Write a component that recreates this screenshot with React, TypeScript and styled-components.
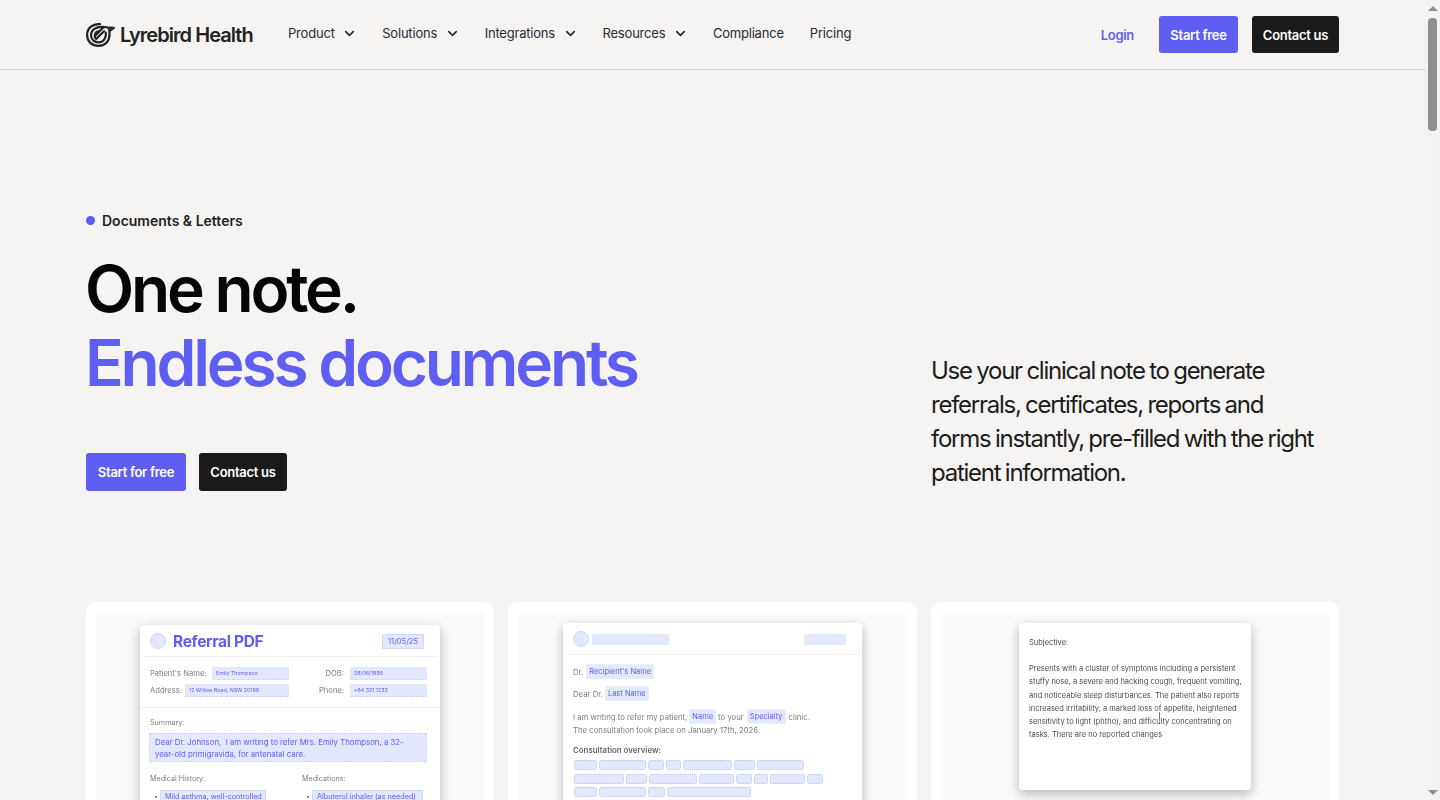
import React from "react";
import styled, {createGlobalStyle} from "styled-components";
import {ChevronDown} from "lucide-react";

const INDIGO = '#5f5ef3'
const INK = '#1a1a1a'
const FIELD = '#e3e8fd'
const FIELD_EDGE = '#cfd6fb'

const GlobalStyle = createGlobalStyle`
  html, body {
    margin: 0;
    height: 800px;
    overflow: hidden;
    background: #f5f4f2;
    font-family: Inter, "Liberation Sans", sans-serif;
  }
  * { box-sizing: border-box; }
`

const Shell = styled.div`
  display: flex;
  width: 1440px;
  height: 800px;
  overflow: hidden;
`

const Page = styled.main`
  width: 1425px;
  flex: none;
`

const Scrollbar = styled.div`
  width: 15px;
  flex: none;
  background: #f3f3f3;
  display: flex;
  flex-direction: column;
  align-items: center;
`

const ScrollArrow = styled.div<{$down?: boolean}>`
  flex: none;
  margin: ${props => props.$down ? 'auto 0 5px' : '6px 0 7px'};
  border-left: 5px solid transparent;
  border-right: 5px solid transparent;
  border-top: ${props => props.$down ? '5px solid #8f8f8f' : 'none'};
  border-bottom: ${props => props.$down ? 'none' : '5px solid #8f8f8f'};
`

const ScrollThumb = styled.div`
  width: 9px;
  height: 113px;
  border-radius: 4px;
  background: #8f8f8f;
`

const Nav = styled.header`
  height: 70px;
  border-bottom: 1px solid #d6d5da;
  padding: 16px 86px 0;
  display: flex;
  align-items: flex-start;
`

const Brand = styled.div`
  display: flex;
  align-items: center;
  gap: 5px;
  height: 37px;
  color: #222;
  font-size: 20px;
  font-weight: 600;
  letter-spacing: -0.95px;
  width: 202px;
  flex: none;
`

const NavLinks = styled.nav`
  display: flex;
  align-items: center;
  gap: 26px;
  height: 34px;
`

const NavLink = styled.a`
  display: flex;
  align-items: center;
  gap: 7.5px;
  color: #2a2a33;
  font-size: 13px;
  letter-spacing: -0.2px;
  white-space: nowrap;
`

const MenuChevron = styled(ChevronDown)`
  margin-right: -1px;
`

const NavActions = styled.div`
  margin-left: auto;
  display: flex;
  align-items: center;
  gap: 14px;
`

const LoginLink = styled.a`
  color: ${INDIGO};
  font-size: 13px;
  font-weight: 600;
  letter-spacing: -0.3px;
  margin-right: 11px;
`

const Button = styled.a<{$dark?: boolean; $width: number; $height: number}>`
  display: flex;
  align-items: center;
  justify-content: center;
  width: ${props => props.$width}px;
  height: ${props => props.$height}px;
  border-radius: 3px;
  background: ${props => props.$dark ? INK : INDIGO};
  color: #fff;
  font-size: 13px;
  font-weight: 600;
  letter-spacing: -0.28px;
  white-space: nowrap;
`

const Content = styled.div`
  padding: 0 86px;
`

const Hero = styled.section`
  display: grid;
  grid-template-columns: 845px 1fr;
  align-items: end;
  padding-top: 140px;
`

const Eyebrow = styled.div`
  display: flex;
  align-items: center;
  gap: 7px;
  height: 20px;
  font-size: 14px;
  font-weight: 600;
  color: #222;
`

const Dot = styled.span`
  width: 9px;
  height: 9px;
  border-radius: 50%;
  background: ${INDIGO};
`

const Title = styled.h1`
  margin: 22px 0 0 -1px;
  font-size: 64px;
  line-height: 74px;
  font-weight: 600;
  letter-spacing: -3.2px;
  color: #050505;
`

const TitleAccent = styled.span`
  display: block;
  color: ${INDIGO};
`

const HeroActions = styled.div`
  display: flex;
  gap: 13px;
  margin-top: 53px;
`

const Lead = styled.p`
  margin: 0 0 1px;
  max-width: 385px;
  font-size: 24px;
  line-height: 34px;
  letter-spacing: -1.25px;
  word-spacing: -1px;
  color: #1c1c1c;
`

const Cards = styled.section`
  display: grid;
  grid-template-columns: 408px 409px 408px;
  gap: 14px;
  margin-top: 111px;
`

const Card = styled.article`
  background: #fff;
  border-radius: 10px;
  padding: 11px 10px;
  height: 400px;
`

const Panel = styled.div<{$top: number}>`
  background: #fafafa;
  border-radius: 4px;
  height: 100%;
  padding-top: ${props => props.$top}px;
  display: flex;
  justify-content: center;
`

const Doc = styled.div<{$width: number; $height: number}>`
  width: ${props => props.$width}px;
  height: ${props => props.$height}px;
  background: #fff;
  border-radius: 4px;
  box-shadow: 0 4px 12px rgba(0, 0, 0, 0.27);
  color: #7d7d82;
  font-size: 8px;
  filter: blur(0.25px);
  align-self: flex-start;
`

const DocHeader = styled.div`
  height: 32px;
  margin: 0 3px;
  padding: 1px 13px 0 7px;
  border-bottom: 1px solid #f1f1f3;
  display: flex;
  align-items: center;
`

const Seal = styled.span`
  width: 16px;
  height: 16px;
  border-radius: 50%;
  background: ${FIELD};
  border: 1px solid ${FIELD_EDGE};
  flex: none;
`

const DocTitle = styled.span`
  margin-left: 7px;
  font-size: 15.5px;
  font-weight: 700;
  letter-spacing: -0.3px;
  color: ${INDIGO};
`

const DateChip = styled.span`
  margin-left: auto;
  width: 42px;
  height: 15px;
  background: ${FIELD};
  border: 1px solid ${FIELD_EDGE};
  border-radius: 1px;
  color: ${INDIGO};
  font-size: 7.5px;
  display: flex;
  align-items: center;
  justify-content: center;
`

const IdentityBlock = styled.div`
  display: grid;
  grid-template-columns: 139px 138px;
  row-gap: 4px;
  padding: 10px 13px 10px 10px;
  border-bottom: 1px solid #f1f1f3;
`

const IdentityRow = styled.div<{$right?: boolean}>`
  display: flex;
  align-items: center;
  justify-content: flex-end;
  gap: ${props => props.$right ? 6 : 2}px;
  font-size: 7.6px;
  height: 13px;
`

const RowLabel = styled.span`
  margin-right: auto;
  white-space: nowrap;
`

const RightLabel = styled.span`
  white-space: nowrap;
`

const FieldBox = styled.span<{$width: number}>`
  width: ${props => props.$width}px;
  height: 13px;
  flex: none;
  background: ${FIELD};
  border-bottom: 1px dashed ${FIELD_EDGE};
  border-radius: 1px;
  color: ${INDIGO};
  font-size: 5.3px;
  padding-left: 4px;
  display: flex;
  align-items: center;
  white-space: nowrap;
`

const DocBody = styled.div`
  padding: 10px 13px 0 9px;
`

const SmallLabel = styled.div<{$gap: number}>`
  font-size: 7.2px;
  line-height: 10px;
  padding-left: 1px;
  margin-bottom: ${props => props.$gap}px;
`

const SummaryField = styled.div`
  background: ${FIELD};
  border: 1px dashed ${FIELD_EDGE};
  color: ${INDIGO};
  font-size: 7.8px;
  line-height: 12.4px;
  padding: 2px 5px;
  height: 29px;
`

const TwoColumns = styled.div`
  display: grid;
  grid-template-columns: 152px 1fr;
  margin-top: 12px;
`

const BulletRow = styled.div`
  display: flex;
  align-items: center;
  gap: 3px;
  padding-left: 6px;
`

const Bullet = styled.span`
  width: 2px;
  height: 2px;
  border-radius: 50%;
  background: #555;
`

const BulletField = styled.span<{$width: number}>`
  width: ${props => props.$width}px;
  background: ${FIELD};
  border: 1px solid ${FIELD_EDGE};
  color: ${INDIGO};
  font-size: 7.25px;
  line-height: 12px;
  padding: 0 4px;
  white-space: nowrap;
`

const GhostBar = styled.span<{$width: number; $push?: boolean}>`
  width: ${props => props.$width}px;
  height: 11px;
  margin-left: ${props => props.$push ? 'auto' : '3px'};
  background: ${FIELD};
  border-radius: 1px;
  flex: none;
`

const LetterBody = styled.div`
  padding: 9px 10px 0;
  font-size: 7.75px;
  color: #7c7c80;
`

const LetterLine = styled.div<{$top?: number; $height?: number}>`
  display: flex;
  align-items: center;
  height: ${props => props.$height ?? 14}px;
  margin-top: ${props => props.$top ?? 0}px;
  white-space: nowrap;
`

const Tag = styled.span<{$left?: number; $right?: number}>`
  background: ${FIELD};
  border: 1px solid #e9edfe;
  border-radius: 1px;
  color: ${INDIGO};
  font-size: 7.5px;
  height: 15px;
  line-height: 13px;
  padding: 0 2px;
  margin: 0 ${props => props.$right ?? 0}px 0 ${props => props.$left ?? 0}px;
`

const OverviewTitle = styled.div`
  margin-top: 7px;
  height: 12px;
  line-height: 12px;
  font-size: 7.9px;
  font-weight: 600;
  color: #666;
`

const ChipStack = styled.div`
  margin-top: 4px;
  display: flex;
  flex-direction: column;
  gap: 3.5px;
`

const ChipRow = styled.div`
  display: flex;
  gap: 2px;
  margin-left: 1px;
  height: 10px;
`

const Chip = styled.span<{$width: number}>`
  width: ${props => props.$width}px;
  height: 10px;
  background: ${FIELD};
  border: 1px dotted #b9c3fa;
  border-radius: 3px;
  flex: none;
`

const NoteBody = styled.div`
  position: relative;
  padding: 13px 10px 0;
  font-size: 7.5px;
  line-height: 13.2px;
  color: #4c4c50;
`

const NoteHeading = styled.p`
  margin: 0 0 13px;
`

const NoteText = styled.p`
  margin: 0;
  white-space: nowrap;
`

const Caret = styled.span`
  position: absolute;
  left: 140px;
  top: 89px;
  width: 1px;
  height: 8px;
  background: #777;
`

const LogoMark: React.FC = () => (
  <svg width="29" height="24" viewBox="0 0 29 24" fill="none" stroke="#222" strokeWidth="2.2" strokeLinecap="round" strokeLinejoin="round">
    <path d="M14 1.1C6 0.6 1.1 5.5 1.1 12C1.1 18.5 6 22.9 12.5 22.9C19 22.9 23.5 18 23.5 12V8C23.5 5.5 21.5 4 19.5 4C18.5 4 17.5 4.4 16.8 5L10 12" />
    <path d="M23.6 4.6L27.8 4.8L23.6 8" />
    <path d="M17 3.9C10 3.5 5 7 5 12C5 16.5 8.5 19.4 12.5 19.4C16.5 19.4 19.8 16 19.8 12V9.5" />
    <path d="M13 8C10.5 8.5 8.8 10.5 8.8 13C8.8 14.5 9.4 15.5 10.2 16L18 8.2" />
  </svg>
)

const NAV_ITEMS: [string, boolean][] = [
  ['Product', true],
  ['Solutions', true],
  ['Integrations', true],
  ['Resources', true],
  ['Compliance', false],
  ['Pricing', false],
]

const CHIP_ROWS = [
  [23, 47, 16, 15, 49, 21, 47],
  [50, 21, 48, 35, 16, 14, 35, 16],
  [23, 47, 17, 84],
]

const ReferralDoc: React.FC = () => (
  <Doc $width={300} $height={340}>
    <DocHeader>
      <Seal />
      <DocTitle>Referral PDF</DocTitle>
      <DateChip>11/05/25</DateChip>
    </DocHeader>
    <IdentityBlock>
      <IdentityRow>
        <RowLabel>Patient's Name:</RowLabel>
        <FieldBox $width={77}>Emily Thompson</FieldBox>
      </IdentityRow>
      <IdentityRow $right>
        <RightLabel>DOB:</RightLabel>
        <FieldBox $width={77}>28/06/1995</FieldBox>
      </IdentityRow>
      <IdentityRow>
        <RowLabel>Address:</RowLabel>
        <FieldBox $width={104}>12 Willow Road, NSW 20199</FieldBox>
      </IdentityRow>
      <IdentityRow $right>
        <RightLabel>Phone:</RightLabel>
        <FieldBox $width={77}>+64 321 1233</FieldBox>
      </IdentityRow>
    </IdentityBlock>
    <DocBody>
      <SmallLabel $gap={5}>Summary:</SmallLabel>
      <SummaryField>Dear Dr. Johnson,&nbsp; I am writing to refer Mrs. Emily Thompson, a 32-year-old primigravida, for antenatal care.</SummaryField>
      <TwoColumns>
        <div>
          <SmallLabel $gap={6}>Medical History:</SmallLabel>
          <BulletRow>
            <Bullet />
            <BulletField $width={106}>Mild asthma, well-controlled</BulletField>
          </BulletRow>
        </div>
        <div>
          <SmallLabel $gap={6}>Medications:</SmallLabel>
          <BulletRow>
            <Bullet />
            <BulletField $width={111}>Albuterol inhaler (as needed)</BulletField>
          </BulletRow>
        </div>
      </TwoColumns>
    </DocBody>
  </Doc>
)

const LetterDoc: React.FC = () => (
  <Doc $width={299} $height={340}>
    <DocHeader>
      <Seal />
      <GhostBar $width={77} />
      <GhostBar $width={42} $push />
    </DocHeader>
    <LetterBody>
      <LetterLine $height={15}>
        Dr. <Tag $left={3}>Recipient's Name</Tag>
      </LetterLine>
      <LetterLine $top={7} $height={15}>
        Dear Dr. <Tag $left={2}>Last Name</Tag>
      </LetterLine>
      <LetterLine $top={8} $height={15}>
        I am writing to refer my patient, <Tag $left={2} $right={2}>Name</Tag> to your <Tag $left={3} $right={3}>Specialty</Tag> clinic.
      </LetterLine>
      <LetterLine $top={-1}>The consultation took place on January 17th, 2026.</LetterLine>
      <OverviewTitle>Consultation overview:</OverviewTitle>
      <ChipStack>
        {CHIP_ROWS.map((row, rowIndex) => (
          <ChipRow key={rowIndex}>
            {row.map((width, chipIndex) => <Chip key={chipIndex} $width={width} />)}
          </ChipRow>
        ))}
      </ChipStack>
    </LetterBody>
  </Doc>
)

const NoteDoc: React.FC = () => (
  <Doc $width={232} $height={167}>
    <NoteBody>
      <NoteHeading>Subjective:</NoteHeading>
      <NoteText>Presents with a cluster of symptoms including a persistent</NoteText>
      <NoteText>stuffy nose, a severe and hacking cough, frequent vomiting,</NoteText>
      <NoteText>and noticeable sleep disturbances. The patient also reports</NoteText>
      <NoteText>increased irritability, a marked loss of appetite, heightened</NoteText>
      <NoteText>sensitivity to light (phtho), and difficulty concentrating on</NoteText>
      <NoteText>tasks. There are no reported changes</NoteText>
      <Caret />
    </NoteBody>
  </Doc>
)

const App: React.FC = () => (
  <Shell>
    <GlobalStyle />
    <Page>
      <Nav>
        <Brand>
          <LogoMark />
          Lyrebird Health
        </Brand>
        <NavLinks>
          {NAV_ITEMS.map(([label, hasMenu]) => (
            <NavLink key={label}>
              {label}
              {hasMenu && <MenuChevron size={15} strokeWidth={2.4} color="#222" />}
            </NavLink>
          ))}
        </NavLinks>
        <NavActions>
          <LoginLink>Login</LoginLink>
          <Button $width={79} $height={37}>Start free</Button>
          <Button $dark $width={87} $height={37}>Contact us</Button>
        </NavActions>
      </Nav>
      <Content>
        <Hero>
          <div>
            <Eyebrow><Dot />Documents &amp; Letters</Eyebrow>
            <Title>
              One note.
              <TitleAccent>Endless documents</TitleAccent>
            </Title>
            <HeroActions>
              <Button $width={100} $height={38}>Start for free</Button>
              <Button $dark $width={88} $height={38}>Contact us</Button>
            </HeroActions>
          </div>
          <Lead>
            Use your clinical note to generate referrals, certificates, reports and forms instantly, pre-filled with the right patient information.
          </Lead>
        </Hero>
        <Cards>
          <Card><Panel $top={12}><ReferralDoc /></Panel></Card>
          <Card><Panel $top={10}><LetterDoc /></Panel></Card>
          <Card><Panel $top={10}><NoteDoc /></Panel></Card>
        </Cards>
      </Content>
    </Page>
    <Scrollbar>
      <ScrollArrow />
      <ScrollThumb />
      <ScrollArrow $down />
    </Scrollbar>
  </Shell>
)

export default App;
